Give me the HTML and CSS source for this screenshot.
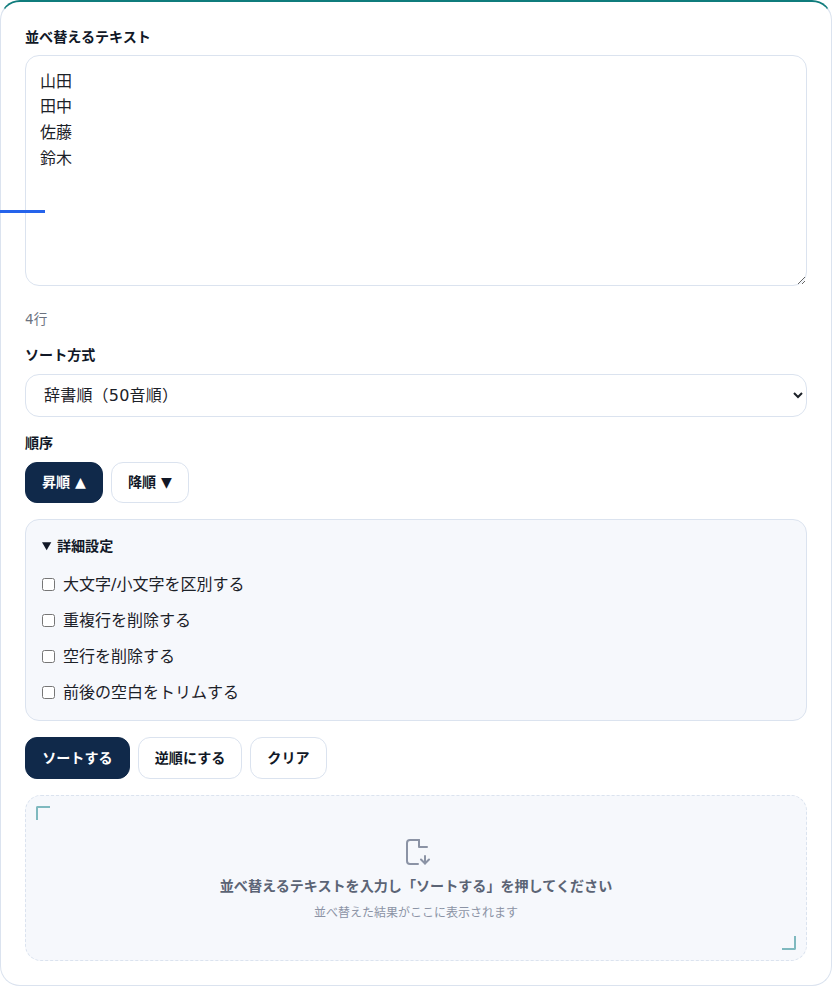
FILE: index.html
```html
<!DOCTYPE html>
<html lang="ja">
<head>
<meta charset="utf-8">
<title>テキスト並べ替え</title>
<link rel="stylesheet" href="styles.css">
</head>
<body>
<div class="progress"></div>
<main class="card">
  <div class="field field-first">
    <label class="label" for="src">並べ替えるテキスト</label>
    <textarea id="src" class="textarea">山田
田中
佐藤
鈴木</textarea>
    <p class="count">4行</p>
  </div>
  <div class="field">
    <label class="label" for="mode">ソート方式</label>
    <select id="mode" class="select"><option>辞書順（50音順）</option></select>
  </div>
  <div class="field">
    <span class="label">順序</span>
    <div class="btns">
      <button class="btn primary">昇順 ▲</button>
      <button class="btn">降順 ▼</button>
    </div>
  </div>
  <details class="panel" open>
    <summary class="summary">詳細設定</summary>
    <label class="check"><input type="checkbox">大文字/小文字を区別する</label>
    <label class="check"><input type="checkbox">重複行を削除する</label>
    <label class="check"><input type="checkbox">空行を削除する</label>
    <label class="check"><input type="checkbox">前後の空白をトリムする</label>
  </details>
  <div class="btns actions">
    <button class="btn primary">ソートする</button>
    <button class="btn">逆順にする</button>
    <button class="btn">クリア</button>
  </div>
  <section class="empty">
    <span class="corner tl"></span>
    <span class="corner br"></span>
    <svg class="icon" width="28" height="28" viewBox="0 0 28 28" fill="none" stroke="#8b93a5" stroke-width="2" stroke-linecap="round" stroke-linejoin="round"><path d="M17 2H8a3 3 0 0 0-3 3v18a3 3 0 0 0 3 3h8"/><path d="M17 2v7h8"/><path d="M23 18v7.5"/><path d="M19 21.5l4 4 4-4"/></svg>
    <p class="empty-title">並べ替えるテキストを入力し「ソートする」を押してください</p>
    <p class="empty-sub">並べ替えた結果がここに表示されます</p>
  </section>
</main>
</body>
</html>
```
FILE: styles.css
```css
* { box-sizing: border-box; }
html, body { margin: 0; padding: 0; background: #fff; }
body {
  font-family: "DejaVu Sans", "Noto Sans CJK JP", sans-serif;
  color: #1c2128;
  width: 832px;
  height: 986px;
  overflow: hidden;
}
.progress {
  position: absolute;
  left: 0;
  top: 210px;
  width: 45px;
  height: 3px;
  background: #2563eb;
}
.card {
  height: 986px;
  padding: 26px 24px 24px;
  background: #fff;
  border: 1px solid #dbe3ef;
  border-top: 2px solid #0f7c7c;
  border-radius: 20px;
  display: flex;
  flex-direction: column;
}
.field { display: flex; flex-direction: column; flex: none; }
.field-first { padding-top: 1px; }
.label {
  display: block;
  font-size: 14.08px;
  font-weight: 700;
  line-height: 17px;
  margin-bottom: 10px;
  color: #111827;
}
.field-first .label { margin-bottom: 9px; }
.textarea {
  display: block;
  width: 782px;
  height: 231px;
  padding: 12.8px 14px;
  border: 1px solid #dbe3ef;
  border-radius: 14px;
  font: 16px/25.6px "DejaVu Sans", "Noto Sans CJK JP", sans-serif;
  color: #1c2128;
  background: #fff;
  outline: none;
}
.count {
  margin: 24px 0 18px;
  font-size: 13.6px;
  line-height: 19px;
  color: #6b7280;
}
.select {
  display: block;
  width: 782px;
  height: 43px;
  padding: 0 14px;
  border: 1px solid #dbe3ef;
  border-radius: 14px;
  background: #fff;
  font: 16px "DejaVu Sans", "Noto Sans CJK JP", sans-serif;
  letter-spacing: 0.2px;
  color: #1c2128;
  margin-bottom: 18px;
}
.btns { display: flex; gap: 8px; flex: none; }
.btn {
  height: 41px;
  padding: 0 16px 3px;
  border: 1px solid #dbe3ef;
  border-radius: 12px;
  background: #fff;
  color: #111827;
  font: 700 14.08px "DejaVu Sans", "Noto Sans CJK JP", sans-serif;
}
.primary { background: #10294a; border-color: #10294a; color: #fff; }
.panel {
  flex: none;
  margin-top: 16px;
  height: 202px;
  padding: 15px 16px 16px;
  background: #f6f8fc;
  border: 1px solid #dbe3ef;
  border-radius: 14px;
}
.summary {
  font-size: 14.08px;
  font-weight: 700;
  line-height: 22px;
  margin-bottom: 8px;
  color: #111827;
}
.check {
  display: flex;
  align-items: center;
  gap: 8px;
  height: 36px;
  font-size: 16px;
  color: #1c2128;
}
.check input { width: 13px; height: 13px; margin: 2px 0 0; }
.actions { margin-top: 16px; }
.actions .btn { height: 42px; }
.actions .primary { padding-left: 16.2px; padding-right: 16.2px; }
.empty {
  flex: none;
  position: relative;
  margin-top: 16px;
  height: 166px;
  padding-top: 42px;
  background: #f6f8fc;
  border: 1px dashed #dbe3ef;
  border-radius: 16px;
  text-align: center;
}
.corner {
  position: absolute;
  width: 14px;
  height: 14px;
  border: 0 solid #7fb9bf;
}
.corner.tl { left: 10px; top: 10px; border-top-width: 2px; border-left-width: 2px; border-top-left-radius: 2px; }
.corner.br { right: 10px; bottom: 10px; border-bottom-width: 2px; border-right-width: 2px; border-bottom-right-radius: 2px; }
.icon { display: block; margin: 0 auto; }
.empty-title {
  margin: 10px 0 0;
  font-size: 14.08px;
  font-weight: 700;
  line-height: 20px;
  color: #5b6475;
}
.empty-sub {
  margin: 8px 0 0;
  font-size: 12px;
  line-height: 18px;
  color: #8b93a5;
}
```
